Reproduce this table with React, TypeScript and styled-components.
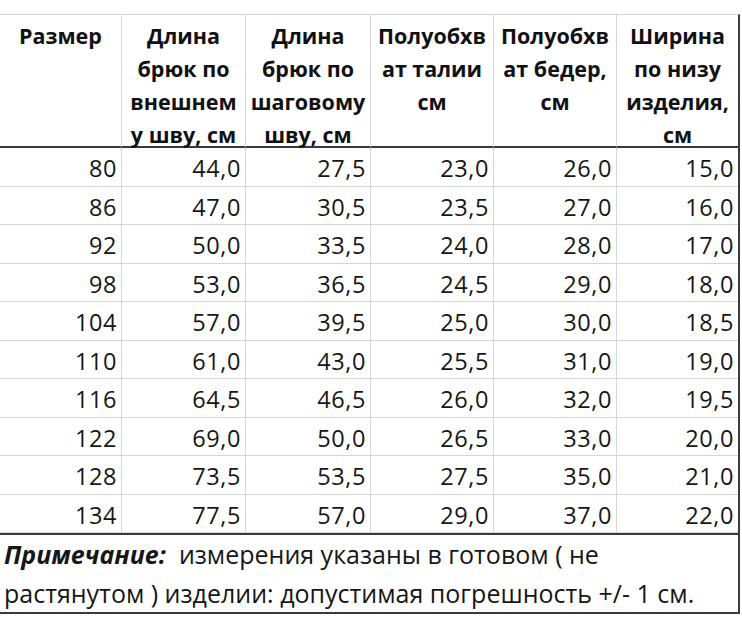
import styled, { createGlobalStyle } from "styled-components";

const GlobalStyle = createGlobalStyle`
  html, body {
    margin: 0;
    padding: 0;
    background: #ffffff;
  }
  body {
    font-family: "Open Sans", "Noto Sans", "DejaVu Sans", sans-serif;
    color: #141414;
  }
`;

const columns = "122px 124px 125px 123px 123px 121px";

const rows = [
  ["80", "44,0", "27,5", "23,0", "26,0", "15,0"],
  ["86", "47,0", "30,5", "23,5", "27,0", "16,0"],
  ["92", "50,0", "33,5", "24,0", "28,0", "17,0"],
  ["98", "53,0", "36,5", "24,5", "29,0", "18,0"],
  ["104", "57,0", "39,5", "25,0", "30,0", "18,5"],
  ["110", "61,0", "43,0", "25,5", "31,0", "19,0"],
  ["116", "64,5", "46,5", "26,0", "32,0", "19,5"],
  ["122", "69,0", "50,0", "26,5", "33,0", "20,0"],
  ["128", "73,5", "53,5", "27,5", "35,0", "21,0"],
  ["134", "77,5", "57,0", "29,0", "37,0", "22,0"],
];

const headers = [
  ["Размер"],
  ["Длина", "брюк по", "внешнем", "у шву, см"],
  ["Длина", "брюк по", "шаговому", "шву, см"],
  ["Полуобхв", "ат талии", "см"],
  ["Полуобхв", "ат бедер,", "см"],
  ["Ширина", "по низу", "изделия,", "см"],
];

const Page = styled.div`
  padding-top: 14px;
  width: 742px;
  height: 624px;
  box-sizing: border-box;
`;

const Sheet = styled.div`
  width: 740px;
  border-top: 1px solid #d2d2d2;
  border-right: 2px solid #3c3c3c;
  box-sizing: border-box;
`;

const Grid = styled.div`
  display: grid;
  grid-template-columns: ${columns};
  grid-template-rows: 133px repeat(10, 38.5px);
`;

const HeadCell = styled.div<{ $last?: boolean }>`
  height: 133px;
  box-sizing: border-box;
  padding-top: 4px;
  border-right: ${(p) => (p.$last ? "none" : "1px solid #d6d6d6")};
  border-bottom: 2px solid #3a3a3a;
  font-weight: 700;
  font-size: 21.5px;
  line-height: 33px;
  text-align: center;
  color: #111;
  white-space: nowrap;
  overflow: visible;
  position: relative;
`;

const Cell = styled.div<{ $last?: boolean }>`
  box-sizing: border-box;
  display: flex;
  align-items: center;
  justify-content: flex-end;
  padding: 3px 4px 0 0;
  border-right: ${(p) => (p.$last ? "none" : "1px solid #d6d6d6")};
  border-bottom: 1px solid #d6d6d6;
  font-size: 23.5px;
  color: #161616;
  letter-spacing: 0.6px;
`;

const Note = styled.div`
  border-top: 2px solid #3a3a3a;
  border-bottom: 2px solid #3a3a3a;
  padding: 0 0 0 4px;
  font-size: 25px;
  line-height: 38.5px;
  color: #161616;
  white-space: nowrap;
`;

const NoteLabel = styled.span`
  font-weight: 700;
  font-style: italic;
`;

export default function App() {
  return (
    <>
      <GlobalStyle />
      <Page>
        <Sheet>
          <Grid>
            {headers.map((lines, i) => (
              <HeadCell key={i} $last={i === headers.length - 1}>
                {lines.map((line) => (
                  <div key={line}>{line}</div>
                ))}
              </HeadCell>
            ))}
            {rows.map((row, r) =>
              row.map((value, c) => (
                <Cell key={`${r}-${c}`} $last={c === row.length - 1}>
                  {value}
                </Cell>
              ))
            )}
          </Grid>
          <Note>
            <div>
              <NoteLabel>Примечание:</NoteLabel>&nbsp; измерения указаны в готовом ( не
            </div>
            <div>растянутом ) изделии: допустимая погрешность +/- 1 см.</div>
          </Note>
        </Sheet>
      </Page>
    </>
  );
}
